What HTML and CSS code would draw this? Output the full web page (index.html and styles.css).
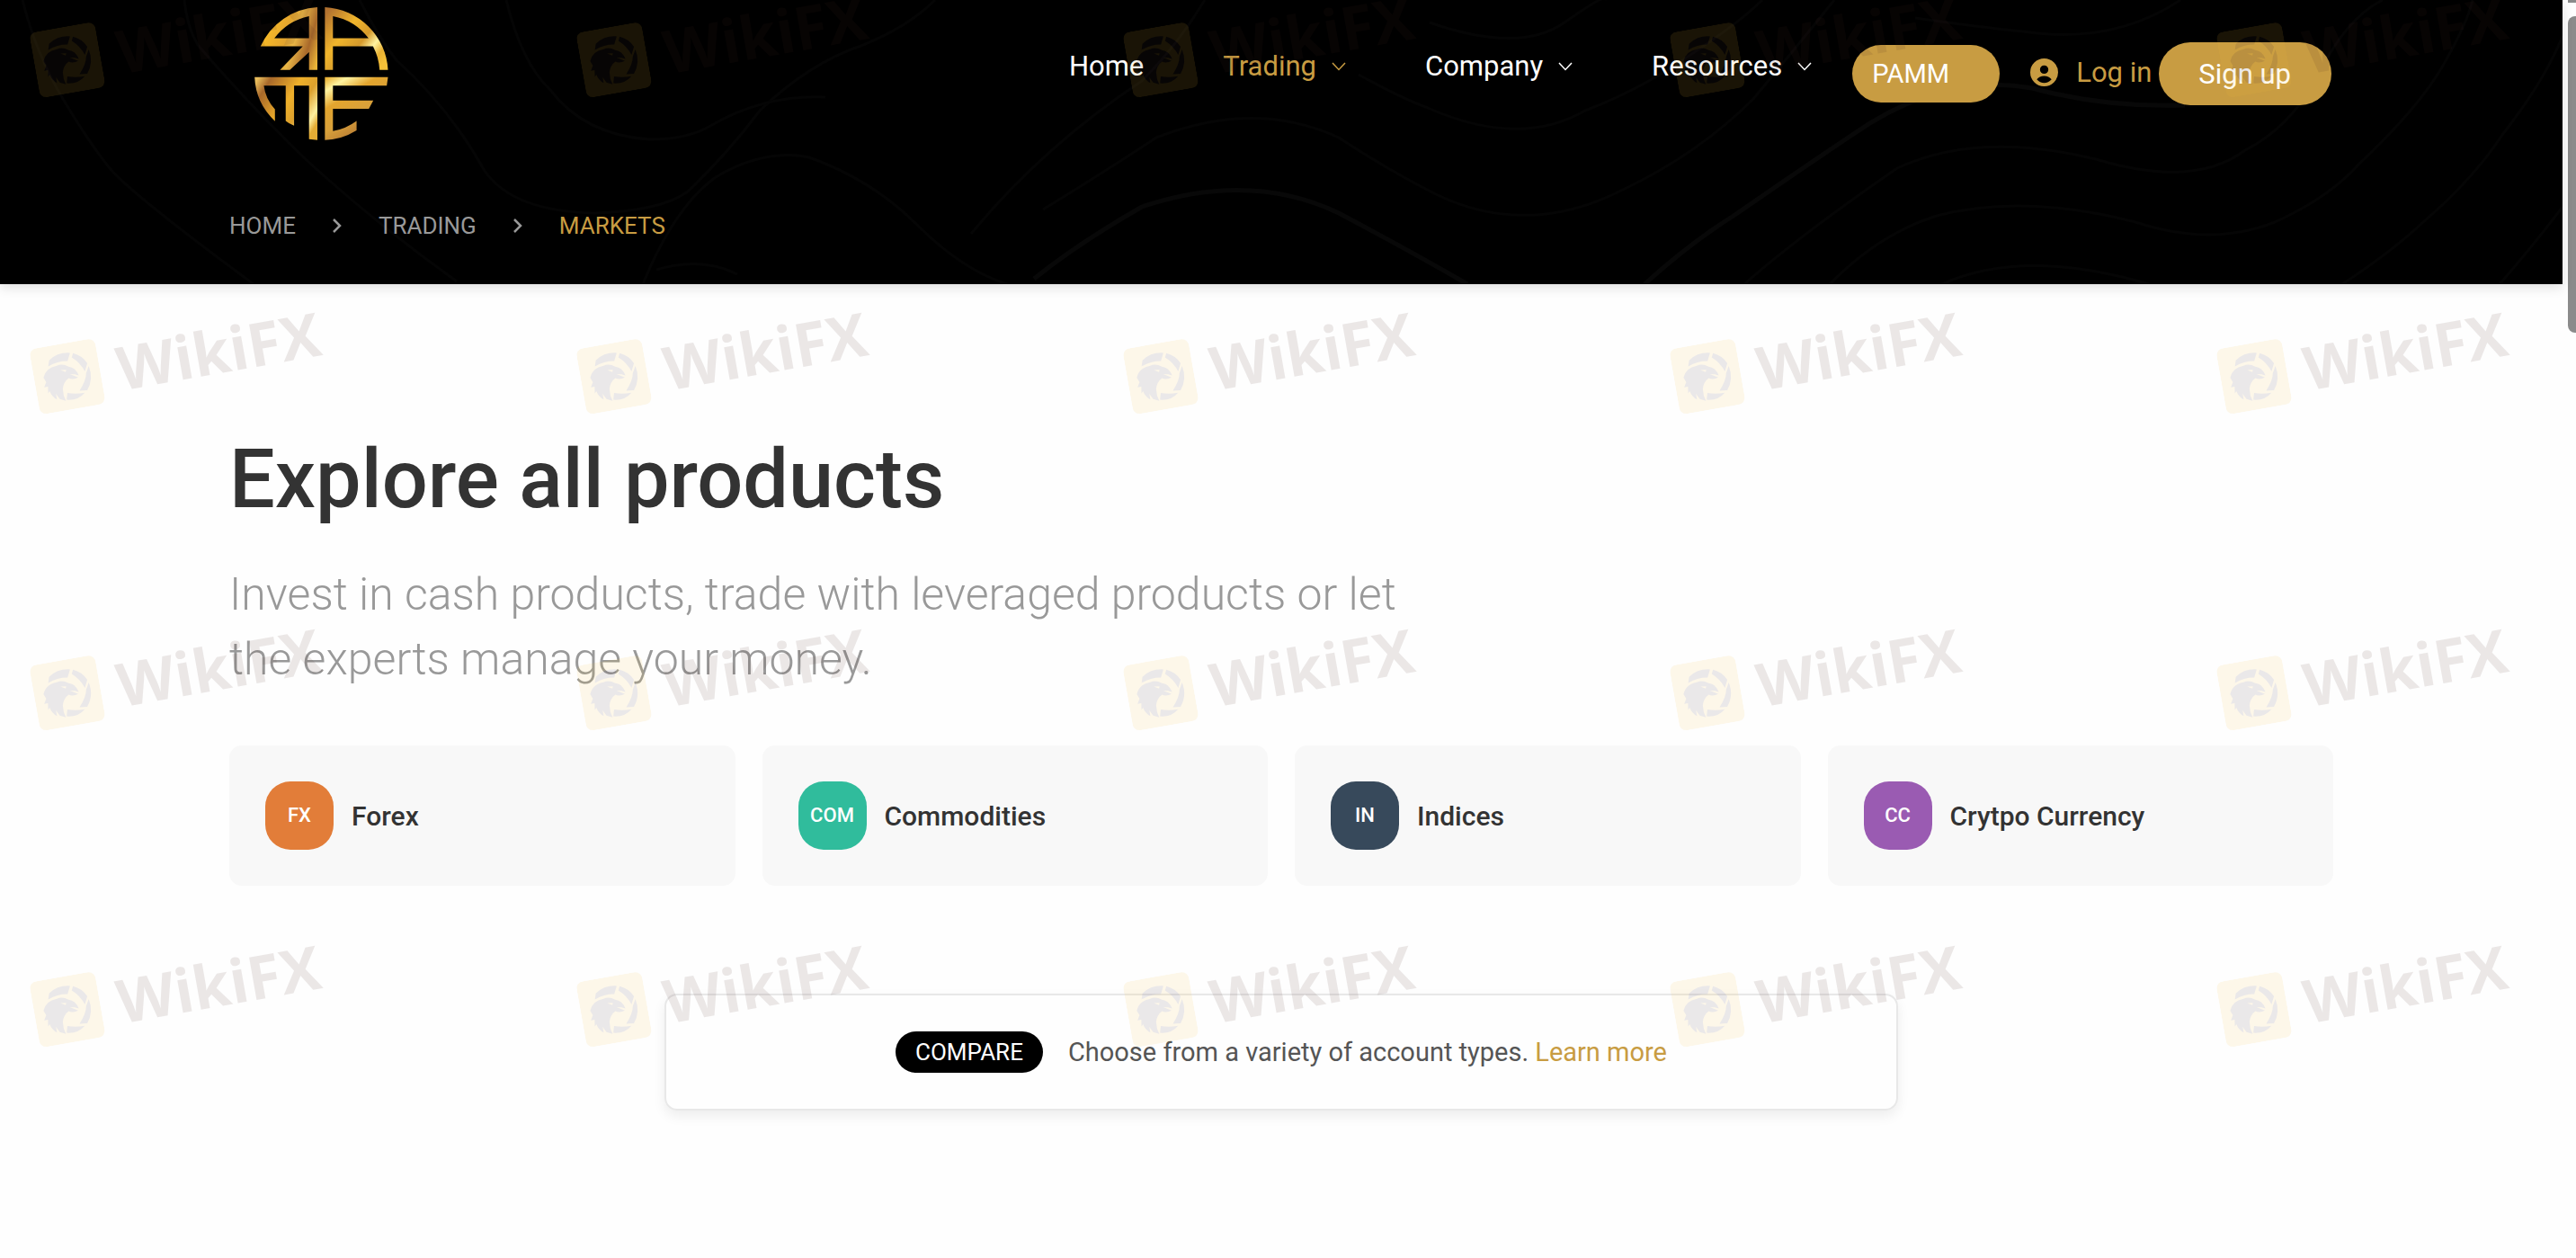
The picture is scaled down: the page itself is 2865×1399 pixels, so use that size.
FILE: index.html
```html
<!DOCTYPE html>
<html lang="en">
<head>
<meta charset="utf-8">
<title>Markets</title>
<link rel="stylesheet" href="styles.css">
</head>
<body>
<svg class="defs" aria-hidden="true">
  <symbol id="bird" viewBox="0 0 70 70">
    <path fill="#f7c13a" d="M9 0H61Q70 0 70 9V61Q70 70 61 70H9Q0 70 0 61V9Q0 0 9 0Z"/>
    <g fill="#483038">
      <path d="M19 15Q29 8 42 11L38 19Q28 17 17 21Z"/>
      <path d="M45 12Q54 16 58 25L54 33Q51 23 43 16Z"/>
      <path d="M59 28Q62 42 53 53L45 52Q54 42 55 35Z"/>
      <path d="M50 55Q42 62 30 59L32 52Q40 55 50 55Z"/>
      <path fill-rule="evenodd" d="M10 32Q14 22 26 22Q32 20 38 25Q45 27 47 36L43 34L38 33L46 38Q40 40 36 37Q30 40 28 47Q27 54 29 60L23 57L20 51L20 57Q15 53 14 47L12 49L13 42L9 42L12 37ZM29 27L34 30L35 28Z"/>
    </g>
  </symbol>
  <symbol id="down" viewBox="0 0 16 10"><path d="M1 1L8 8.500L15 1" fill="none" stroke="currentColor" stroke-width="1.500"/></symbol>
  <symbol id="next" viewBox="0 0 10 18"><path d="M1 2L8 9L1 16" fill="none" stroke="currentColor" stroke-width="2.500"/></symbol>
</svg>

<div class="page">
  <header class="header">
    <svg class="waves" viewBox="0 0 2850 316" preserveAspectRatio="xMidYMid slice" aria-hidden="true">
      <path d="M25 0Q40 60 70 110T122 187T282 316"/>
      <path d="M205 0Q208 30 220 50Q280 120 343 180Q420 250 508 313"/>
      <path d="M400 0Q420 40 441 67Q500 120 539 190Q570 235 661 237Q735 235 765 213Q810 170 845 123Q900 70 960 50Q1010 30 1040 0"/>
      <path d="M563 0Q580 70 612 100Q650 150 722 155Q765 155 790 140Q850 105 918 108"/>
      <path d="M715 316Q750 230 796 197Q850 165 900 175Q970 200 1020 250T1120 316"/>
      <path d="M730 300Q780 285 820 305"/>
      <path d="M1080 260Q1160 163 1270 90Q1310 50 1340 0"/>
      <path d="M1160 233Q1230 190 1286 153Q1396 110 1489 153Q1545 190 1599 217Q1700 265 1807 210Q1890 170 1950 110Q2000 50 2040 0"/>
      <path class="strong" d="M1150 310Q1200 270 1270 230Q1390 190 1489 237Q1570 280 1632 316"/>
      <path d="M1511 83Q1560 110 1588 120Q1690 165 1763 123Q1810 105 1851 80Q1930 30 1960 0"/>
      <path d="M1590 25Q1690 60 1740 25T1785 0"/>
      <path class="strong" d="M1829 316Q1880 270 1928 240Q2000 190 2060 150Q2160 80 2260 98Q2340 120 2430 117"/>
      <path d="M1940 316Q2000 263 2110 187Q2200 145 2331 177Q2440 210 2497 167Q2550 140 2580 80T2650 0"/>
      <path d="M2035 316Q2090 260 2154 240Q2250 215 2375 247Q2460 275 2530 247Q2590 220 2623 183Q2690 120 2717 73T2750 0"/>
      <path d="M2160 316Q2250 275 2390 316"/>
      <path d="M2605 316Q2660 280 2695 247Q2750 200 2783 150Q2830 90 2850 40"/>
      <path d="M2780 316Q2820 270 2850 230"/>
      <path d="M2130 20Q2200 30 2250 35Q2350 50 2425 0"/>
    </svg>
    <div class="container">
      <div class="topbar">
        <a class="logo" href="#" aria-label="Rame home">
          <svg viewBox="129 24 447 445" width="149" height="148">
            <defs>
              <linearGradient id="g1" gradientUnits="userSpaceOnUse" x1="149" y1="120" x2="345" y2="180">
                <stop offset="0" stop-color="#fbbd27"/><stop offset=".4" stop-color="#e3a52e"/><stop offset=".55" stop-color="#e9b646"/><stop offset=".8" stop-color="#a8682a"/><stop offset="1" stop-color="#eab438"/>
              </linearGradient>
              <linearGradient id="g2" gradientUnits="userSpaceOnUse" x1="364" y1="50" x2="560" y2="210">
                <stop offset="0" stop-color="#b27230"/><stop offset=".35" stop-color="#f0b52c"/><stop offset=".6" stop-color="#d59a2c"/><stop offset=".75" stop-color="#fff3a0"/><stop offset=".88" stop-color="#e9b132"/><stop offset="1" stop-color="#f5c038"/>
              </linearGradient>
              <linearGradient id="g3" gradientUnits="userSpaceOnUse" x1="135" y1="270" x2="345" y2="400">
                <stop offset="0" stop-color="#e9bd5c"/><stop offset=".15" stop-color="#a8682a"/><stop offset=".5" stop-color="#efb02a"/><stop offset=".7" stop-color="#dca02d"/><stop offset=".9" stop-color="#fff0a0"/><stop offset="1" stop-color="#e5ac34"/>
              </linearGradient>
              <linearGradient id="g4" gradientUnits="userSpaceOnUse" x1="364" y1="262" x2="480" y2="450">
                <stop offset="0" stop-color="#e8ae30"/><stop offset=".17" stop-color="#fff3a0"/><stop offset=".4" stop-color="#e3a52e"/><stop offset=".7" stop-color="#d8a03a"/><stop offset="1" stop-color="#b87c34"/>
              </linearGradient>
            </defs>
            <g fill-rule="evenodd">
              <path fill="url(#g1)" d="M339 24A222 222 0 0 0 149 155H290L214 234H247L311 174V234H339ZM311 54V128H195A196 196 0 0 1 311 54Z"/>
              <path fill="url(#g2)" d="M364 24A222 222 0 0 1 575 234H547A196 196 0 0 0 525 155H391V234H364ZM391 54V128H510A196 196 0 0 0 391 54Z"/>
              <path fill="url(#g3)" d="M129 258H339V468L311 465V286H261V420Q245 414 233 404V286H160Q165 330 197 365V405Q133 345 129 258Z"/>
              <path fill="url(#g4)" d="M364 258H575L571 286H391V336H526L511 364H391V438Q435 430 470 404V436Q420 467 364 468Z"/>
            </g>
          </svg>
        </a>
        <nav class="nav" aria-label="Main">
          <a href="#">Home</a>
          <a class="active" href="#">Trading<svg class="down"><use href="#down"/></svg></a>
          <a href="#">Company<svg class="down"><use href="#down"/></svg></a>
          <a href="#">Resources<svg class="down"><use href="#down"/></svg></a>
        </nav>
        <div class="account">
          <button class="pamm" type="button">PAMM</button>
          <a class="login" href="#"><svg viewBox="2 2 20 20" width="31" height="31" aria-hidden="true"><path fill="currentColor" fill-rule="evenodd" d="M12 2A10 10 0 1 1 12 22A10 10 0 1 1 12 2ZM12 7A3 3 0 1 0 12 13A3 3 0 1 0 12 7ZM6.700 17Q8.500 14.500 12 14.500T17.300 17Q15 19.600 12 19.600T6.700 17Z"/></svg>Log in</a>
          <button class="signup" type="button">Sign up</button>
        </div>
      </div>
      <nav class="crumbs" aria-label="Breadcrumb">
        <a href="#">HOME</a>
        <svg class="next"><use href="#next"/></svg>
        <a href="#">TRADING</a>
        <svg class="next"><use href="#next"/></svg>
        <a class="active" href="#" aria-current="page">MARKETS</a>
      </nav>
    </div>
  </header>

  <main class="container main">
    <h1>Explore all products</h1>
    <p class="lead">Invest in cash products, trade with leveraged products or let the experts manage your money.</p>
    <div class="cards">
      <a class="card" href="#"><span class="badge orange">FX</span>Forex</a>
      <a class="card" href="#"><span class="badge green">COM</span>Commodities</a>
      <a class="card" href="#"><span class="badge navy">IN</span>Indices</a>
      <a class="card" href="#"><span class="badge purple">CC</span>Crytpo Currency</a>
    </div>
    <section class="compare">
      <span class="pill">COMPARE</span>
      <p>Choose from a variety of account types. <a href="#">Learn more</a></p>
    </section>
  </main>
</div>

<div class="scrollbar" aria-hidden="true"><div class="arrow"></div><div class="thumb"></div></div>

<div class="marks" aria-hidden="true">
  <div class="mark"><svg><use href="#bird"/></svg>WikiFX</div>
  <div class="mark"><svg><use href="#bird"/></svg>WikiFX</div>
  <div class="mark"><svg><use href="#bird"/></svg>WikiFX</div>
  <div class="mark"><svg><use href="#bird"/></svg>WikiFX</div>
  <div class="mark"><svg><use href="#bird"/></svg>WikiFX</div>
  <div class="mark"><svg><use href="#bird"/></svg>WikiFX</div>
  <div class="mark"><svg><use href="#bird"/></svg>WikiFX</div>
  <div class="mark"><svg><use href="#bird"/></svg>WikiFX</div>
  <div class="mark"><svg><use href="#bird"/></svg>WikiFX</div>
  <div class="mark"><svg><use href="#bird"/></svg>WikiFX</div>
  <div class="mark"><svg><use href="#bird"/></svg>WikiFX</div>
  <div class="mark"><svg><use href="#bird"/></svg>WikiFX</div>
  <div class="mark"><svg><use href="#bird"/></svg>WikiFX</div>
  <div class="mark"><svg><use href="#bird"/></svg>WikiFX</div>
  <div class="mark"><svg><use href="#bird"/></svg>WikiFX</div>
  <div class="mark"><svg><use href="#bird"/></svg>WikiFX</div>
  <div class="mark"><svg><use href="#bird"/></svg>WikiFX</div>
  <div class="mark"><svg><use href="#bird"/></svg>WikiFX</div>
  <div class="mark"><svg><use href="#bird"/></svg>WikiFX</div>
  <div class="mark"><svg><use href="#bird"/></svg>WikiFX</div>
</div>
</body>
</html>
```

FILE: styles.css
```css
:root {
  --gold: #c89c42;
  --ink: #333;
}

* { box-sizing: border-box; }

body {
  position: relative;
  display: flex;
  min-height: 100vh;
  margin: 0;
  overflow-x: hidden;
  background: #fefefe;
  color: var(--ink);
  font-family: Roboto, "Open Sans", sans-serif;
  font-size: 29px;
}

a { color: inherit; text-decoration: none; }
p, h1 { margin: 0; }
svg { flex: none; display: block; }
button { border: 0; font: inherit; cursor: pointer; }

.defs { position: absolute; width: 0; height: 0; }

.page { flex: 1; min-width: 0; }

.container {
  width: calc(100% - 48px);
  max-width: 2340px;
  margin: 0 auto;
}

/* Header */
.header {
  position: relative;
  padding-bottom: 45px;
  background: #000;
  color: #fff;
  box-shadow: 0 4px 12px rgba(0, 0, 0, .12);
}

.header .container { position: relative; }

.waves {
  position: absolute;
  inset: 0;
  width: 100%;
  height: 100%;
  fill: none;
  stroke: #050505;
  stroke-width: 3;
}

.waves .strong { stroke: #080808; stroke-width: 5; }

.topbar {
  display: flex;
  align-items: flex-start;
  padding: 8px 2px 0 28px;
}

.nav {
  display: flex;
  gap: 88px;
  margin: 40px 45px 0 auto;
  font-size: 31px;
  line-height: 52px;
}

.nav a { display: flex; align-items: center; gap: 17px; }
.down { width: 16px; height: 10px; }
.active { color: var(--gold); }

.account {
  display: flex;
  align-items: center;
  margin-top: 39px;
}

.pamm {
  height: 64px;
  padding: 0 56px 0 22px;
  border-radius: 32px;
  background: var(--gold);
  color: #fff;
}

.login {
  display: flex;
  align-items: center;
  gap: 20px;
  margin: 0 8px 4px 34px;
  color: var(--gold);
  font-size: 31px;
}

.signup {
  height: 70px;
  padding: 0 45px 0 44px;
  border-radius: 35px;
  background: var(--gold);
  color: #fff;
  font-size: 31px;
}

.crumbs {
  display: flex;
  align-items: center;
  gap: 41px;
  margin-top: 75px;
  color: #999;
  font-size: 26px;
  line-height: 40px;
}

.next { width: 10px; height: 18px; }
.crumbs .active { color: var(--gold); }

/* Products */
.main { padding: 168px 0 120px; }

h1 {
  font-size: 90px;
  font-weight: 500;
  line-height: 100px;
}

.lead {
  max-width: 1340px;
  margin-top: 41px;
  color: #999;
  font-size: 50px;
  font-weight: 300;
  line-height: 72px;
}

.cards {
  display: grid;
  grid-template-columns: repeat(4, 1fr);
  gap: 30px;
  margin-top: 60px;
}

.card {
  display: flex;
  align-items: center;
  gap: 20px;
  padding: 40px;
  border-radius: 14px;
  background: #f8f8f8;
  font-size: 30px;
  font-weight: 500;
}

.badge {
  flex: none;
  width: 76px;
  border-radius: 28px;
  color: #fff;
  font-size: 22px;
  line-height: 76px;
  text-align: center;
}

.orange { background: #e27d39; }
.green { background: #30bc9c; }
.navy { background: #37495b; }
.purple { background: #9a5bb2; }

/* Account comparison */
.compare {
  display: flex;
  align-items: center;
  justify-content: center;
  gap: 28px;
  max-width: 1372px;
  margin: 120px auto 0;
  padding: 40px;
  border: 2px solid #e8e8e8;
  border-radius: 14px;
  box-shadow: 0 6px 14px rgba(0, 0, 0, .07);
  color: #555;
  line-height: 46px;
}

.pill {
  padding: 0 22px;
  border-radius: 23px;
  background: #000;
  color: #fff;
  font-size: 26px;
}

.compare a { color: var(--gold); }

/* Scroll rail */
.scrollbar { width: 15px; padding-left: 6px; overflow: hidden; }
.arrow { height: 3px; background: #8b8b8b; }
.thumb {
  width: 16px;
  height: 352px;
  margin-top: 15px;
  border-radius: 8px;
  background: #8b8b8b;
}

/* Watermark laid over the page */
.marks {
  position: absolute;
  inset: 0;
  display: grid;
  grid-template-columns: repeat(5, 608px);
  grid-auto-rows: 352px;
  overflow: hidden;
  opacity: .1;
  pointer-events: none;
}

.mark {
  display: flex;
  align-items: center;
  gap: 19px;
  height: 70px;
  margin: 32px 0 0 38px;
  transform: rotate(-10deg);
  transform-origin: 35px 35px;
  color: #4a2822;
  font: 700 67px/70px "Open Sans", sans-serif;
}

.mark svg { width: 74px; height: 74px; }
```
